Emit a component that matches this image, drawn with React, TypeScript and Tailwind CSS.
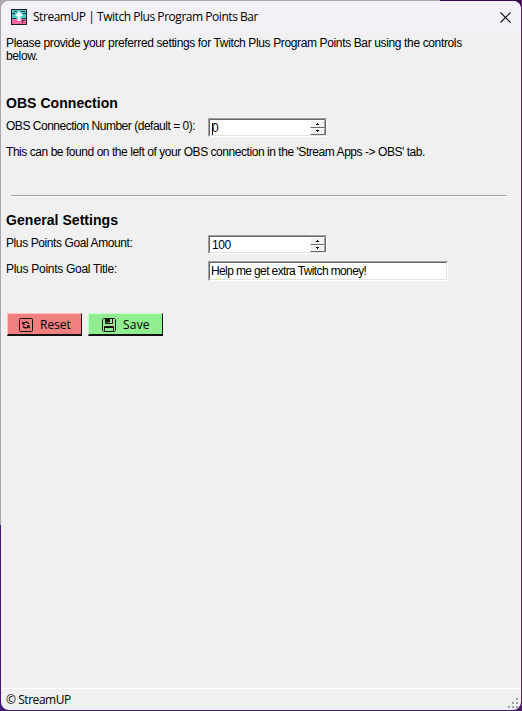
import type { ReactNode } from 'react';

function AppIcon() {
  return (
    <svg width="16" height="16" viewBox="0 0 16 16" shapeRendering="crispEdges">
      <rect width="16" height="16" fill="#17212b" />
      <rect x="1" y="1" width="14" height="9" fill="#4fc9c6" />
      <rect x="1" y="10" width="14" height="5" fill="#f5679f" />
      <path d="M1 4h3v1H1zM3 2h3v1H3zM10 2h4v1h-4zM12 4h3v1h-3zM1 9h4v1H1zM11 9h4v1h-4zM11 11h3v1h-3zM11 12h1v2h-1z" fill="#1c4450" />
      <path d="M8 2l4 5H9.5v5h-3V7H4z" fill="#f4fbfc" shapeRendering="auto" />
    </svg>
  );
}

function Heading({ children, className }: { children: ReactNode; className: string }) {
  return <h2 className={`h-[17px] whitespace-nowrap text-[14px] leading-[17px] font-bold tracking-[0.05px] ${className}`}>{children}</h2>;
}

function Sunken({ children, className }: { children: ReactNode; className: string }) {
  return (
    <div className={`border border-t-[#a0a0a0] border-l-[#a0a0a0] border-r-white border-b-white ${className}`}>
      <div className="flex h-full border border-t-[#696969] border-l-[#696969] border-r-[#e3e3e3] border-b-[#e3e3e3] bg-white">
        {children}
      </div>
    </div>
  );
}

function SpinButton({ up }: { up?: boolean }) {
  return (
    <button className="flex h-[8px] w-[15px] items-center justify-center border border-t-white border-l-white border-r-[#a0a0a0] border-b-[#696969] bg-[#f0f0f0]">
      <svg width="3" height="2" viewBox="0 0 3 2" shapeRendering="crispEdges">
        <path d={up ? 'M1 0h1v1H1zM0 1h3v1H0z' : 'M0 0h3v1H0zM1 1h1v1H1z'} fill="#000" />
      </svg>
    </button>
  );
}

function NumberBox({ value, caret }: { value: string; caret?: boolean }) {
  return (
    <Sunken className="h-[19px] w-[119px]">
      <div className="flex flex-1 items-center pt-[2px] pl-[2px] text-[12px] leading-[13px]">
        {caret && <span className="-mr-px h-[12px] w-px bg-black" />}
        <span className="tracking-[-0.4px]">{value}</span>
      </div>
      <div className="-mr-px flex w-[16px] flex-col justify-between border-r border-[#696969] bg-[#a0a0a0]">
        <SpinButton up />
        <SpinButton />
      </div>
    </Sunken>
  );
}

function ResetIcon() {
  return (
    <svg width="14" height="14" viewBox="0 0 14 14" fill="none" stroke="#111">
      <rect x=".5" y=".5" width="13" height="13" rx="1" />
      <path d="M4.5 5.2C6 3.5 9 3.6 10 6M9.5 8.8C8 10.5 5 10.4 4 8" strokeWidth="1.3" />
      <path d="M3.2 3.2v3.6h3.4zM10.8 10.8V7.2H7.4z" fill="#111" stroke="none" />
    </svg>
  );
}

function SaveIcon() {
  return (
    <svg width="14" height="14" viewBox="0 0 14 14" fill="none" stroke="#111">
      <path d="M1.5.5h11l1 1v11l-1 1h-11l-1-1v-11z" />
      <path d="M3.5.5v5h7v-5M2.5 13.5V8.5h9v5" />
      <path d="M4 1h4v3.5H4zM3 8h8v2H3z" fill="#111" stroke="none" />
    </svg>
  );
}

function ActionButton({ icon, label, className }: { icon: ReactNode; label: string; className: string }) {
  return (
    <button className={`flex h-[23px] w-[75px] items-center gap-[7px] border border-r-[#111] border-b-2 border-b-[#111] pt-px font-['Open_Sans','Noto_Sans',sans-serif] text-[12px] ${className}`}>
      {icon}
      <span>{label}</span>
    </button>
  );
}

export default function App() {
  return (
    <div className="h-[711px] w-[522px] bg-[linear-gradient(to_right,#aaa6ab_0_440px,#3b0750_440px)] font-['Liberation_Sans',Arial,sans-serif] text-black">
      <div className="h-full bg-[linear-gradient(to_bottom,transparent_0_525px,#43196f_525px)]">
        <div className="h-full bg-[linear-gradient(to_right,transparent_0_521px,#5b2468_521px)] p-px">
          <main className="flex h-[709px] w-[520px] flex-col overflow-hidden rounded-[8px] bg-[#f0f0f0]">
            <header className="flex h-[32px] shrink-0 items-center bg-[#f4f0f8] px-[10px]">
              <AppIcon />
              <span className="ml-[6px] flex-1 font-['Open_Sans','Noto_Sans',sans-serif] text-[12px] tracking-[-0.46px] whitespace-nowrap">
                StreamUP | Twitch Plus Program Points Bar
              </span>
              <svg width="11" height="11" viewBox="0 0 11 11" stroke="#111" strokeWidth="1.1">
                <path d="M.5.5l10 10M10.5.5l-10 10" />
              </svg>
            </header>
            <section className="flex-1 pt-[4px] pl-[5px] text-[12px] leading-[13px] whitespace-nowrap">
              <p className="tracking-[-0.365px]">
                Please provide your preferred settings for Twitch Plus Program Points Bar using the controls
                <br />
                below.
              </p>
              <Heading className="mt-[32px]">OBS Connection</Heading>
              <div className="mt-[6px] flex">
                <label className="w-[202px] pt-[2px] tracking-[-0.48px]">OBS Connection Number (default = 0):</label>
                <NumberBox value="0" caret />
              </div>
              <p className="mt-[9px] tracking-[-0.45px]">
                This can be found on the left of your OBS connection in the &apos;Stream Apps -&gt; OBS&apos; tab.
              </p>
              <hr className="mt-[36px] ml-[5px] h-[2px] w-[496px] border-t border-r border-b border-t-[#a0a0a0] border-r-white border-b-white" />
              <Heading className="mt-[15px]">General Settings</Heading>
              <div className="mt-[6px] flex">
                <label className="w-[202px] pt-[2px] tracking-[-0.4px]">Plus Points Goal Amount:</label>
                <NumberBox value="100" />
              </div>
              <div className="mt-[7px] flex">
                <label className="w-[202px] pt-[2px] tracking-[-0.28px]">Plus Points Goal Title:</label>
                <Sunken className="h-[20px] w-[240px]">
                  <span className="pt-[2px] pl-px tracking-[-0.62px]">Help me get extra Twitch money!</span>
                </Sunken>
              </div>
              <div className="mt-[32px] ml-px flex gap-[6px]">
                <ActionButton icon={<ResetIcon />} label="Reset" className="border-t-[#ffc0c0] border-l-[#ffc0c0] bg-[#f08080] pl-[11px]" />
                <ActionButton icon={<SaveIcon />} label="Save" className="border-t-[#c8ffc8] border-l-[#c8ffc8] bg-[#90ee90] pl-[13px] tracking-[0.2px]" />
              </div>
            </section>
            <footer className="flex h-[22px] shrink-0 items-end justify-between border-t border-white pr-[3px] pb-[2px] pl-[5px]">
              <span className="font-['Open_Sans','Noto_Sans',sans-serif] text-[12px] leading-[17px] tracking-[-0.45px]">© StreamUP</span>
              <svg width="10" height="10" viewBox="0 0 10 10" fill="#a0a0a0">
                <path d="M8 0h2v2H8zM4 4h2v2H4zM8 4h2v2H8zM0 8h2v2H0zM4 8h2v2H4zM8 8h2v2H8z" />
              </svg>
            </footer>
          </main>
        </div>
      </div>
    </div>
  );
}
